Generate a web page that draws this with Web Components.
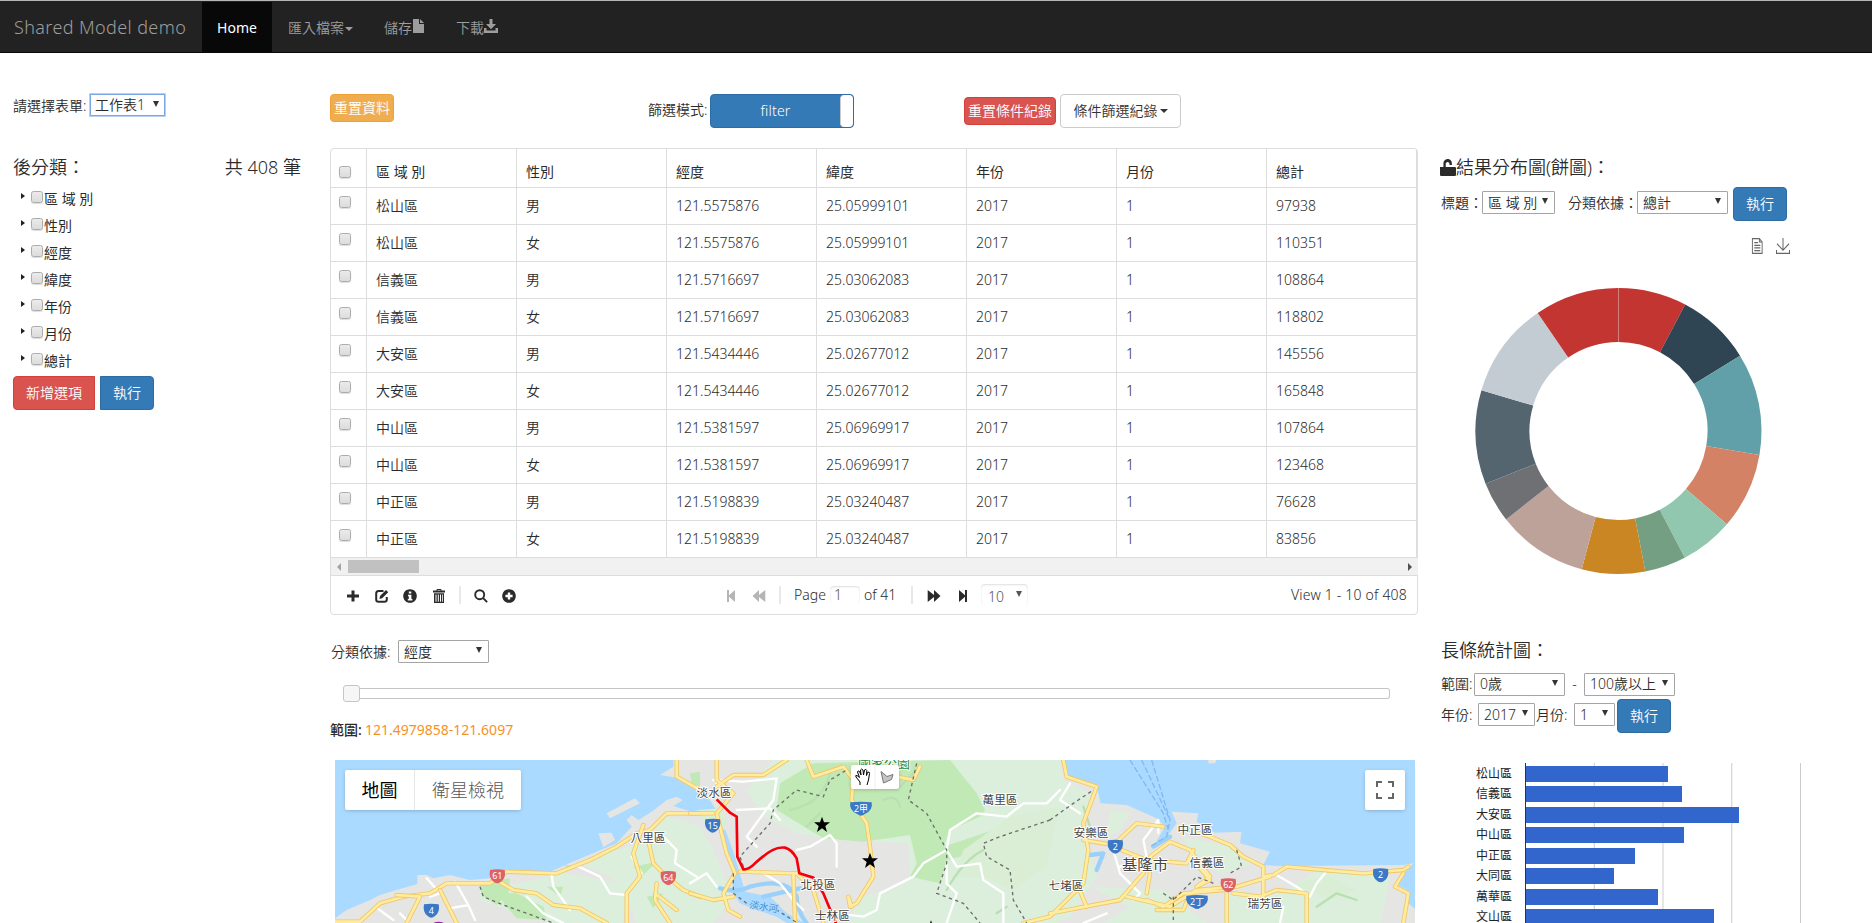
<!DOCTYPE html>
<html lang="zh-Hant">
<head>
<meta charset="utf-8">
<title>Shared Model demo</title>
<style>
html,body{margin:0;padding:0;background:#fff}
body{width:1872px;height:923px;overflow:hidden;font:14px/20px "Noto Sans","Noto Sans CJK TC",sans-serif;font-weight:350;color:#2b2b2b}
</style>
</head>
<body>
<model-app></model-app>
<script>
const define = (name, render) => customElements.define(name, class extends HTMLElement {
  connectedCallback() {
    if (this.shadowRoot) return;
    const t = document.createElement('template');
    t.innerHTML = render(this);
    this.attachShadow({mode: 'open'}).append(t.content.cloneNode(true));
  }
});

/* Icons, each on a 14-unit grid */
const ICONS = {
  file: '<path d="M2 0h6v5h5v9H2zM9 0l4 4H9z"/>',
  save: '<path d="M5.5 0h3v5H12L7 10.200 2 5h3.500zM0 9h2.500v2.500h9V9H14v5H0z"/>',
  lock: '<path d="M0 6.500h3V4a3.700 3.700 0 0 1 7.400-.6V5H8.300V3.800a1.700 1.700 0 0 0-3.300 0v2.700h8q1 0 1 1V13q0 1-1 1H1q-1 0-1-1z"/>',
  plus: '<path d="M5.500 1.500h3v4h4.500v3H8.500v4h-3v-4H1v-3h4.500z"/>',
  edit: '<path d="M8.500 2H3.500Q1.200 2 1.200 4.500v6q0 2.300 2.300 2.300h6q2.300 0 2.300-2.300V8" fill="none" stroke="currentColor" stroke-width="2"/><path d="M5 7l6-6 2.200 2.200-6 6L4.500 10z"/>',
  info: '<path fill-rule="evenodd" d="M7 .2a6.800 6.800 0 1 0 .01 0zM5.800 2.500h2.500v2H5.800zM5 5.700h3.400V10h1v1.500H4.800V10h1V7.200H5z"/>',
  trash: '<path fill-rule="evenodd" d="M4.500 1q0-1 1-1h3q1 0 1 1v.6H13v1.900H1V1.600h3.500zM5.500 1.600h3V1h-3zM2 4.200h10V14H2zm1.500 1.300v7.300h1V5.500zm2.300 0v7.300h1V5.500zm2.200 0v7.300h1V5.500zm2 0v7.300h.8V5.500z"/>',
  search: '<circle cx="5.700" cy="5.700" r="4.500" fill="none" stroke="currentColor" stroke-width="1.900"/><path d="M8.500 9.800l1.400-1.400L13.800 12.400 12.400 13.800z"/>',
  add: '<path fill-rule="evenodd" d="M7 .2a6.800 6.800 0 1 0 .01 0zM5.800 3.400h2.400v2.400h2.400v2.400H8.200v2.400H5.800V8.200H3.400V5.800h2.400z"/>',
  first: '<path d="M3 1h2v5.300L11 1v12L5 7.700V13H3z"/>',
  back: '<path d="M7 1v5l6.300-5v12L7 8v5L.5 7z"/>',
  fwd: '<path d="M7 1v5L.7 1v12L7 8v5l6.500-6z"/>',
  last: '<path d="M11 1H9v5.300L3 1v12l6-5.300V13h2z"/>',
  doc: '<path d="M1.500.5h7.500l3 3v10H1.500zM9 .5v3h3M3.500 4h4M3.500 6.500h6.500M3.500 8.700h6.500M3.500 11h6.500" fill="none" stroke="currentColor"/>',
  down: '<path d="M7 0v10.500M1 5l6 5.700L13 5M.5 10.500v3h13v-3" fill="none" stroke="currentColor"/>'
};
define('x-icon', e => `<style>:host{display:inline-block;flex:none;width:14px;height:14px}svg{display:block;width:100%;height:100%}</style>
<svg viewBox="0 0 14 14" preserveAspectRatio="none" fill="currentColor">${ICONS[e.getAttribute('name')]}</svg>`);

define('x-button', () => `<style>
:host{display:inline-flex;flex:none;box-sizing:border-box;align-items:center;justify-content:center;height:34px;color:#fff;background:#337ab7;border:1px solid #2e6da4;border-radius:4px;white-space:nowrap}
:host([kind=warn]){background:#f0ad4e;border-color:#eea236}
:host([kind=danger]){background:#d9534f;border-color:#d43f3a}
:host([kind=plain]){background:#fff;border-color:#ccc;color:#333}
:host([small]){height:28px}
.caret{border:4px solid transparent;border-top-color:currentColor;border-bottom:0;margin-left:2px}
:host(:not([kind=plain])) .caret{display:none}
</style><slot></slot><i class="caret"></i>`);

define('x-select', () => `<style>
:host{display:inline-flex;flex:none;box-sizing:border-box;align-items:center;justify-content:space-between;height:23px;border:1px solid #a5a5a5;border-radius:1px;background:#fff;padding:0 6px 0 5px;white-space:nowrap}
:host([focus]){height:24px;border:2px solid #7ba4e6;outline:1px solid #b8d0f5;outline-offset:-1px;border-radius:2px;padding:0 5px 0 4px}
i{border:3.500px solid transparent;border-top:6px solid #333;border-bottom:0;margin-top:-3px}
</style><slot></slot><i></i>`);

define('x-check', () => `<style>
:host{display:block;flex:none;box-sizing:border-box;width:12px;height:12px;border:1px solid #acacac;border-radius:2.500px;background:linear-gradient(#ebebeb,#dcdcdc);box-shadow:0 1px 1px #ddd}
</style>`);

define('nav-bar', () => `<style>
:host{display:flex;box-sizing:border-box;height:53px;padding-top:1px;background:#222;border-top:1px solid #b3b7b7;border-bottom:1px solid #080808;color:#9d9d9d;line-height:51px;white-space:nowrap}
b{font-weight:300;font-size:18px;width:188px;padding-left:14px;letter-spacing:.38px}
.on{background:#080808;color:#fff;width:70px;text-align:center;font-weight:400}
span{display:flex;align-items:center}
.i{width:96px;margin-left:16px}.s{width:72px}
.c{border:4px solid transparent;border-top-color:#9d9d9d;border-bottom:0;margin:3px 0 0 1px}
</style><b>Shared Model demo</b><div class="on">Home</div>
<span class="i">匯入檔案<i class="c"></i></span><span class="s">儲存<x-icon name="file" style="margin-top:-2px;margin-left:-1px"></x-icon></span><span>下載<x-icon name="save" style="margin-top:-2px"></x-icon></span>`);

define('class-panel', () => `<style>
:host{display:block;width:288px;padding:40px 0 0 13px}
.f{display:flex;align-items:center;height:24px}.f span{width:76px;padding-top:1px}
.h{display:flex;justify-content:space-between;font-size:18px;line-height:26px;margin:37px 0 5px}
.r{display:flex;height:27px;line-height:28px;font-weight:400;align-items:center}
.r i{border:3px solid transparent;border-left:4px solid #222;border-right:0;margin:-5px 6px 0 8px}
.r x-check{margin:-4px 1px 0 0}
.b{display:flex;gap:5px;margin-top:2px}
</style>
<div class="f"><span>請選擇表單:</span><x-select focus style="width:77px">工作表1</x-select></div>
<div class="h"><span>後分類：</span><span>共 408 筆</span></div>
${['區 域 別','性別','經度','緯度','年份','月份','總計'].map(t => `<div class="r"><i></i><x-check></x-check><span>${t}</span></div>`).join('')}
<div class="b"><x-button kind="danger" style="width:82px;border-radius:4px 0 0 4px">新增選項</x-button><x-button style="width:54px;border-radius:0 4px 4px 0">執行</x-button></div>`);

const ROWS = [['松山區','121.5575876','25.05999101',97938,110351],['信義區','121.5716697','25.03062083',108864,118802],['大安區','121.5434446','25.02677012',145556,165848],['中山區','121.5381597','25.06969917',107864,123468],['中正區','121.5198839','25.03240487',76628,83856]]
  .flatMap(([n, x, y, m, f]) => [[n,'男',x,y,2017,1,m],[n,'女',x,y,2017,1,f]]);

define('data-grid', () => `<style>
:host{display:block;box-sizing:border-box;width:1088px;height:467px}
.g{width:1088px;box-sizing:border-box;border:1px solid #ddd;border-radius:4px;height:467px}
.row{display:grid;grid-template-columns:36px repeat(7,150px);height:37px;width:1087px;border-bottom:1px solid #ddd;box-sizing:border-box}
.row div{border-right:1px solid #ddd;padding-left:9px;line-height:36px;box-sizing:border-box}
.row div:first-child{padding:8px 0 0 8px}
.head{height:39px;font-weight:400}.head div{line-height:46px}.head div:first-child{padding-top:17px}
.sc{display:flex;align-items:center;height:18px;width:1087px;background:#f1f1f1;border-bottom:1px solid #ddd;box-sizing:border-box}
.sc i{border:4px solid transparent}
.l{border-right-color:#a3a3a3!important;border-left:0!important;margin:0 7px 0 6px}
.sc b{width:71px;height:13px;background:#c1c1c1}
.r{border-left-color:#505050!important;border-right:0!important;margin-left:auto;margin-right:6px}
.p{display:flex;align-items:center;height:37px}
.p>*{flex:none}.sep{width:2px;height:18px;background:#e8e8e8}
.a{display:flex;align-items:center;width:395px;padding:3px 0 0 15px;box-sizing:border-box}
.c{display:flex;align-items:center;width:559px}
.off{color:#b5b5b5}
.in{box-sizing:border-box;width:30px;height:18px;line-height:17px;padding-left:4px;border-radius:4px;box-shadow:inset 0 1px 2px #ddd;margin:0 4px 0 3px;color:#555}
.sel{display:flex;justify-content:space-between;box-sizing:border-box;width:47px;height:22px;padding:3px 6px 0 7px;border-radius:4px;box-shadow:inset 0 1px 2px #ddd;color:#555}
.sel i{border:3.500px solid transparent;border-top:6px solid #555;border-bottom:0;align-self:flex-start;margin-top:4px}
</style><div class="g">
<div class="row head"><div><x-check></x-check></div>${['區 域 別','性別','經度','緯度','年份','月份','總計'].map(t => `<div>${t}</div>`).join('')}</div>
${ROWS.map(r => `<div class="row"><div><x-check></x-check></div>${r.map(t => `<div>${t}</div>`).join('')}</div>`).join('')}
<div class="sc"><i class="l"></i><b></b><i class="r"></i></div>
<div class="p"><div class="a"><x-icon name="plus" style="margin-right:15px"></x-icon><x-icon name="edit" style="margin-right:14px"></x-icon><x-icon name="info" style="margin-right:15px"></x-icon><x-icon name="trash" style="margin-right:14px"></x-icon><span class="sep" style="margin:-3px 13px 0 -1px"></span><x-icon name="search" style="margin-right:14px"></x-icon><x-icon name="add"></x-icon></div>
<div class="c"><x-icon class="off" name="first" style="margin:3px 14px 0 -2px"></x-icon><x-icon class="off" name="back" style="margin:3px 13px 0 0"></x-icon><span class="sep"></span><span style="margin-left:13px;width:33px">Page</span><span class="in">1</span><span style="width:47px">of 41</span><span class="sep"></span><x-icon name="fwd" style="margin:3px 15px 0 14px"></x-icon><x-icon name="last" style="margin:3px 11px 0 0"></x-icon><span class="sel">10<i></i></span></div><span style="width:122px;text-align:right;letter-spacing:.2px;white-space:nowrap">View 1 - 10 of 408</span></div>
</div>`);

define('range-slider', () => `<style>
:host{display:flex;align-items:center;height:18px;width:1047px;margin-left:13px}
i{box-sizing:border-box;width:17px;height:17px;border:1px solid #c5c5c5;border-radius:3px;background:#f6f6f6}
b{box-sizing:border-box;flex:1;height:11px;border:1px solid #c5c5c5;border-left:0;border-radius:0 3px 3px 0}
</style><i></i><b></b>`);

/* Route shields, centred on x,y */
const shield = (x, y, t, c, w = 22) => `<g transform="translate(${x} ${y})"><path d="M${-w} -20Q0 -24 ${w} -20Q${w + 5} 5 10 16Q0 24 -10 16Q${-w - 5} 5 ${-w} -20z" fill="${c}"/><text class="sh" y="8">${t}</text></g>`;
const road = (d, w = 9) => `<path d="${d}" stroke="#f0c764" stroke-width="${w + 4}"/><path d="${d}" stroke="#ffeca0" stroke-width="${w - 1}"/>`;
const street = d => `<path d="${d}" stroke="#fff" stroke-width="7"/>`;
const star = (x, y) => `<path transform="translate(${x} ${y})" d="M0-24L6-7 24-7 10 4 15 22 0 11-15 22-10 4-24-7-6-7z" fill="#000" stroke="none"/>`;

define('map-canvas', () => `<style>
:host{display:block;position:relative;width:1080px;height:163px;overflow:hidden}
svg{display:block;font-family:"Noto Sans","Noto Sans CJK TC",sans-serif;font-weight:400}
.r{fill:none;stroke-linejoin:round;stroke-linecap:round}
.d{fill:none;stroke:#6b6f6b;stroke-width:4;stroke-dasharray:10 10}
text{font-size:35px;fill:#444;text-anchor:middle;paint-order:stroke;stroke:#fff;stroke-width:6;stroke-linejoin:round}
.sh{font-size:27px;fill:#fff;stroke:none}.big{font-size:46px}
.ctl{position:absolute;display:flex;background:#fff;border-radius:2px;box-shadow:0 1px 4px -1px rgba(0,0,0,.3)}
.type{left:10px;top:10px;width:176px;height:40px;font-size:18px;line-height:40px;text-align:center;color:#565656}
.type b{width:69px;font-weight:400;color:#000;border-right:1px solid #e6e6e6}.type span{flex:1;font-weight:300}
.draw{left:516px;top:5px;width:48px;height:24px}
.full{left:1030px;top:10px;width:40px;height:40px}
</style>
<svg width="1080" height="163" viewBox="335 760 1080 163"><rect x="335" y="760" width="1080" height="163" fill="#aadaff"/>
<g transform="translate(330 750) scale(.333333)">
<path fill="#e5e5e3" d="M10 519L15 505 50 480 120 450 150 435 200 420 262 402 262 375 290 375 310 385 360 375 420 390 480 385 525 362 660 365 740 330 860 280 905 230 890 210 905 195 925 210 965 185 1010 150 1040 140 1058 150 1030 168 1085 185 1130 190 1170 240 1190 290 1205 360 1210 430 1230 460 1280 480 1340 500 1380 525 10 525z
M990 75L1030 50 1030 30 2200 30 2215 80 2300 110 2312 160 2390 165 2480 205 2505 230 2470 290 2515 255 2540 220 2525 185 2605 190 2600 215 2655 248 2735 245 2730 280 2820 305 2800 345 2850 348 3220 345 3250 340 3195 400 3240 425 3235 460 3260 480 3260 525 1435 525 1370 490 1320 440 1245 425 1215 320 1190 250 1170 200 1140 150 1050 85z
M830 190L915 145 930 160 840 205zM805 250L845 248 855 270 820 292zM2635 30L2660 30 2655 40 2635 40z"/>
<path fill="#dcefdc" d="M1000 200L1060 210 1110 230 1150 300 1190 400 1200 450 1150 520 920 520 880 400 760 345 850 300 950 280zM450 410L560 400 700 370 890 400 880 519 660 519 560 490 450 450zM1330 30L2190 30 2200 90 2280 130 2260 220 2300 380 2220 500 2160 525 1560 525 1580 440 1690 420 1740 380 1735 280 1600 275 1480 265 1400 250 1300 200 1250 120zM2340 180L2400 190 2370 240 2330 260zM2560 260L2700 290 2780 340 2680 370 2600 340zM2690 430L2860 430 2960 360 3180 385 3150 525 2680 525zM2280 410L2500 420 2640 525 2310 525 2400 470z"/>
<path fill="#c1e9b5" d="M1350 100L1450 40 1860 30 1940 130 1965 180 1950 200 1860 240 1840 290 1990 240 1970 300 1850 330 1830 400 1740 380 1760 340 1740 255 1600 275 1480 265 1340 180zM450 400L540 385 535 430 500 465 455 435zM500 430L560 430 640 470 650 510 560 505 530 470zM650 410L700 410 690 440zM1080 70L1110 65 1110 110 1085 100zM910 350L980 335 940 375zM950 440L1000 430 970 475zM700 345L730 345 725 360z"/>
<path fill="#d9eed5" d="M1100 180L1180 175 1190 240 1130 230zM1900 300L2040 200 2190 170 2150 350 2050 420 1960 380 1870 380zM2890 400L3000 380 3080 420 3000 450z"/>
<g class="r"><path d="M1500 70Q1480 160 1380 180M1850 420Q1900 330 1960 300M1660 150q40-20 50 20M1700 120l60-60M1430 230l40-40M2000 490l30-20M2960 470l60-40 60 20M2260 170l20 60" stroke="#b8e0b2" stroke-width="7"/>
<path d="M1170 415Q1220 430 1260 410 1370 380 1400 440 1400 480 1430 520M1300 440l110-25M2280 315L2320 310 2300 360M2470 290L2520 260" stroke="#9bd0fa" stroke-width="13"/>
${street('M135 470L190 510M210 490L235 515M290 385L330 430 300 440M375 395L415 465 360 475M415 465L435 510M735 345L810 380 840 430 890 435M665 375L670 410 720 480M905 320L935 370M955 250L1000 260 1040 300 1035 340 1100 380M590 440L640 490 700 519M1150 90L1240 95 1340 85 1330 150 1250 260 1280 290M1220 180L1320 175 1350 210M1400 300L1440 290 1500 255 1520 280 1520 350M1520 490L1600 500 1640 480 1650 430 1750 380 1780 340 1850 300 1860 240 1940 190 2030 200 2080 160 2150 160 2190 120M1300 370L1350 400 1390 450 1420 480M1080 400L1130 370 1160 410M1160 30L1160 100M1850 300L1880 350 1950 340 1960 390 2020 430 2020 519M1850 340L1850 400 1880 430 1850 519M2220 100L2190 150 2250 190M2350 300L2370 370 2430 430 2410 450M2485 250L2485 210 2440 270 2450 320 2370 350M2840 375L2900 410 2940 440 2960 400 2985 370M2850 519L2860 470M2260 519L2330 490')}
${road('M15 515L90 515 150 460 220 440 300 430 350 400 480 400 530 365 680 370 780 330 860 290 920 250 960 240 1010 190 1110 190')}
${road('M230 519L270 440 200 435M330 420L380 519M500 390L550 420 620 430 670 465 750 475 830 519M940 225L910 310 930 380 890 430 890 519M950 250L970 340 1010 380 1060 420 1110 440M980 400L975 450 1020 519M975 430L1040 480')}
${road('M1160 30L1160 90 1210 130 1160 190 1190 310 1215 370 1180 430 1195 480 1230 500M1160 110L1210 75 1300 75 1370 30M1080 190L1150 190M1080 430L1150 450 1210 440M1230 365L1400 370 1450 420 1480 519M1390 370L1395 519M1430 30L1450 80 1540 50 1570 90 1565 150 1610 220 1620 290 1630 380 1580 460 1560 470 1555 440 1565 470M1700 80L1750 90 1770 50M1040 30L1040 80 1110 120')}
${road('M2200 30L2210 80 2300 110 2260 220 2275 300 2260 400 2160 500 2080 519M2260 270L2350 285 2420 220 2500 230M2350 290L2450 330 2570 340 2590 300M2520 275L2580 300 2640 380 2600 410 2640 390 2580 320M2580 240L2640 260 2700 285 2740 320 2800 350 2800 380 2830 375 2870 350 2980 360 3100 370 3220 360 3235 350M2160 490L2370 450 2440 370 2460 320 2520 275M2390 440L2520 470 2600 420 2720 410 2820 380M2450 450L2500 470 2560 430 2680 420M2460 370L2450 430M2690 430L2690 519M2710 430L2790 440 2840 420 2930 430 2930 480 2930 519M2750 435L2800 450 2800 375M3220 370L3195 410 3235 430 3220 519M2240 400L2270 470M2480 480L2560 480 2580 430')}
</g>
<path class="d" d="M450 410L460 440 520 465 590 490 670 519M1240 350L1230 320 1320 220 1330 180 1400 120 1480 140 1500 90 1550 60M1760 40L1735 150 1790 190 1850 300 1850 340 1820 430 1900 460 1950 519M2160 210L2010 260 1960 280 1970 320 2040 360 2050 450 2090 519M2160 210L2230 160 2290 120M1210 370L1210 430 1250 460 1340 480 1420 530M2720 300L2735 350 2700 370M2500 430L2530 450 2600 380 2650 400M2530 440L2530 519"/>
<path d="M2400 30L2500 190 2515 240M2435 30L2515 200M2465 30L2520 210 2510 260 2460 290" fill="none" stroke="#84b7f5" stroke-width="4" stroke-dasharray="18 7"/>
<path d="M1160 148L1200 188 1220 200 1222 320 1240 358Q1255 360 1275 340C1320 300 1340 290 1365 293Q1385 298 1400 325L1408 370 1450 383L1480 430 1520 525" fill="none" stroke="#f5000a" stroke-width="8"/>
${star(1476,224)}${star(1620,332)}${star(1803,535)}
<text x="1152" y="141">淡水區</text><text x="954" y="276">八里區</text><text x="1464" y="417">北投區</text><text x="1507" y="511">士林區</text><text x="2010" y="163">萬里區</text><text x="2283" y="261">安樂區</text><text x="2595" y="253">中正區</text><text class="big" x="2445" y="360">基隆市</text><text x="2631" y="352">信義區</text><text x="2208" y="421">七堵區</text><text x="2805" y="475">瑞芳區</text><text x="1300" y="480" transform="rotate(10 1300 480)" style="font-size:28px;fill:#4a8bc8;stroke:#aadaff">淡水河</text><text x="1662" y="55" style="font-size:39px;fill:#2c8a3c">國家公園</text>
${shield(502,380,'61','#db6367')}${shield(1015,385,'64','#db6367')}${shield(304,483,'4','#3b78c5')}${shield(1148,228,'15','#3b78c5')}${shield(1593,177,'2甲','#3b78c5',32)}${shield(2356,291,'2','#3b78c5')}${shield(2695,407,'62','#db6367')}${shield(2601,457,'2丁','#3b78c5',32)}${shield(3152,377,'2','#3b78c5')}
<path d="M310 519Q325 512 342 519z" fill="#9b20a0"/></g></svg>
<div class="ctl type"><b>地圖</b><span>衛星檢視</span></div>
<div class="ctl draw"><svg width="48" height="24" viewBox="0 0 48 24"><path d="M9 20V17L5 12Q4 10 6 10.500L8.500 12.500 6.500 7Q7 5 8.500 6.500L10 10 9.500 5Q10.500 3 12 5L12.500 10 13.500 5Q15 3.500 15.800 5.500L15.500 10.500 16.500 7.500Q18.500 6 18.500 8.500L17.500 15 16 20" fill="#fff" stroke="#000"/><path d="M24 0V24" stroke="#eee"/><path d="M30 6.500L36 11.500 42 9.500 40.500 14.500 32.500 18z" fill="#c4c4c4" stroke="#777"/></svg></div>
<div class="ctl full"><svg width="40" height="40" fill="none" stroke="#666" stroke-width="2"><path d="M12 17V12H17M23 12H28V17M28 23V28H23M17 28H12V23"/></svg></div>`);

/* Slice boundaries in degrees, clockwise from the top */
const STOPS = [0,27.8,58.2,99.7,130.7,152.4,169.2,194.9,231.8,248.4,286.6,325.6,360];
const HUES = ['#c23531','#2f4554','#61a0a8','#d48265','#91c7ae','#749f83','#ca8622','#bda29a','#6e7074','#546570','#c4ccd3','#c23531'];
const pt = (a, r) => `${(142.5 + r * Math.sin(a * Math.PI / 180)).toFixed(2)} ${(143 - r * Math.cos(a * Math.PI / 180)).toFixed(2)}`;
define('donut-chart', () => `<style>:host{display:block;width:286px;height:286px}svg{display:block;overflow:visible}</style><svg width="286" height="286">
${HUES.map((c, i) => `<path d="M${pt(STOPS[i],143)}A143 143 0 0 1 ${pt(STOPS[i+1],143)}L${pt(STOPS[i+1],89)}A89 89 0 0 0 ${pt(STOPS[i],89)}z" fill="${c}"/>`).join('')}
<path d="M142.500 0V54" stroke="#d6807d"/></svg>`);

const BARS = [['松山區',142],['信義區',156],['大安區',213],['中山區',158],['中正區',109],['大同區',88],['萬華區',132],['文山區',188]];
define('bar-chart', () => `<style>
:host{display:flex;height:160px;overflow:hidden;font:400 12px/20.440px "Noto Sans","Noto Sans CJK TC",sans-serif;color:#222}
.n{width:84px;text-align:right;margin-right:13px;margin-top:1px}.n div{height:20.440px}
.p{width:276px;height:160px;border-left:1px solid #333;background:linear-gradient(90deg,transparent 67.750px,#ccc 67.750px,#ccc 68.750px,transparent 68.750px) 0 0/68.750px 100%;padding-top:3px;box-sizing:border-box}
.p i{display:block;background:#36c;height:16px;margin-bottom:4.440px}
</style><div class="n">${BARS.map(b => `<div>${b[0]}</div>`).join('')}</div><div class="p">${BARS.map(b => `<i style="width:${b[1]}px"></i>`).join('')}</div>`);

define('chart-panel', () => `<style>
:host{display:block;width:431px;padding-top:101px}
.t{display:flex;align-items:center;font-size:18px;line-height:26px;height:26px}
.f{display:flex;align-items:center;height:34px}.f>span{flex:none;white-space:nowrap}
.i{display:flex;justify-content:flex-end;width:349px;height:16px;gap:12px;margin:17px 0 34px;color:#666}
donut-chart{margin:0 0 63px 35px}
</style>
<div class="t"><x-icon name="lock" style="width:16px;height:17px;margin-left:-1px"></x-icon>結果分布圖(餅圖)：</div>
<div class="f" style="margin-top:7px"><span style="width:41px;margin-top:-2px">標題：</span><x-select style="width:73px;margin-top:-3px">區 域 別</x-select><span style="width:69px;margin:-2px 0 0 13px">分類依據：</span><x-select style="width:91px;margin-top:-3px">總計</x-select><x-button style="width:54px;margin-left:5px">執行</x-button></div>
<div class="i"><x-icon name="doc" style="width:13px;height:16px"></x-icon><x-icon name="down" style="height:16px"></x-icon></div>
<donut-chart></donut-chart>
<div class="t">長條統計圖：</div>
<div class="f" style="height:24px;margin-top:9px"><span style="width:33px">範圍:</span><x-select style="width:91px">0歲</x-select><span style="width:19px;text-align:center">-</span><x-select style="width:91px">100歲以上</x-select></div>
<div class="f" style="margin-top:3px"><span style="width:37px;margin-top:-2px">年份:</span><x-select style="width:57px;margin-top:-3px">2017</x-select><span style="width:38px;margin:-2px 0 0 1px">月份:</span><x-select style="width:41px;margin-top:-3px">1</x-select><x-button style="width:54px;margin-left:2px">執行</x-button></div>
<bar-chart style="margin:30px 0 0 -13px"></bar-chart>`);

define('main-panel', () => `<style>
:host{display:block;width:1111px;padding-top:41px;margin-left:29px}
.t{display:flex;align-items:flex-start;height:54px}
.tg{display:flex;box-sizing:border-box;width:144px;height:34px;border:1px solid #2e6da4;border-radius:4px;background:#337ab7;color:#fff;line-height:32px}
.tg span{flex:1;text-align:center;letter-spacing:.2px}.tg i{width:12px;background:#fff;border-left:1px solid #ccc;border-radius:4px}
.s{display:flex;align-items:center;height:23px;margin:25px 0 21px 1px}.s span{width:67px}
.v{display:flex;margin:18px 0 20px;white-space:nowrap}.v b{font-weight:500;width:35px}
.v span{color:#f6931f;font-weight:400}
</style>
<div class="t"><x-button kind="warn" small style="width:64px">重置資料</x-button><span style="margin:6px 0 0 254px;width:62px">篩選模式:</span><div class="tg"><span>filter</span><i></i></div><x-button kind="danger" small style="width:92px;margin:3px 0 0 110px">重置條件紀錄</x-button><x-button kind="plain" style="width:121px;margin-left:4px">條件篩選紀錄</x-button></div>
<data-grid></data-grid>
<div class="s"><span>分類依據:</span><x-select style="width:91px">經度</x-select></div>
<range-slider></range-slider>
<div class="v"><b>範圍:</b><span>121.4979858-121.6097</span></div>
<map-canvas style="margin-left:5px"></map-canvas>`);

define('model-app', () => `<style>:host{display:block;height:923px;overflow:hidden}main{display:flex}</style>
<nav-bar></nav-bar><main><class-panel></class-panel><main-panel></main-panel><chart-panel></chart-panel></main>`);
</script>
</body>
</html>
